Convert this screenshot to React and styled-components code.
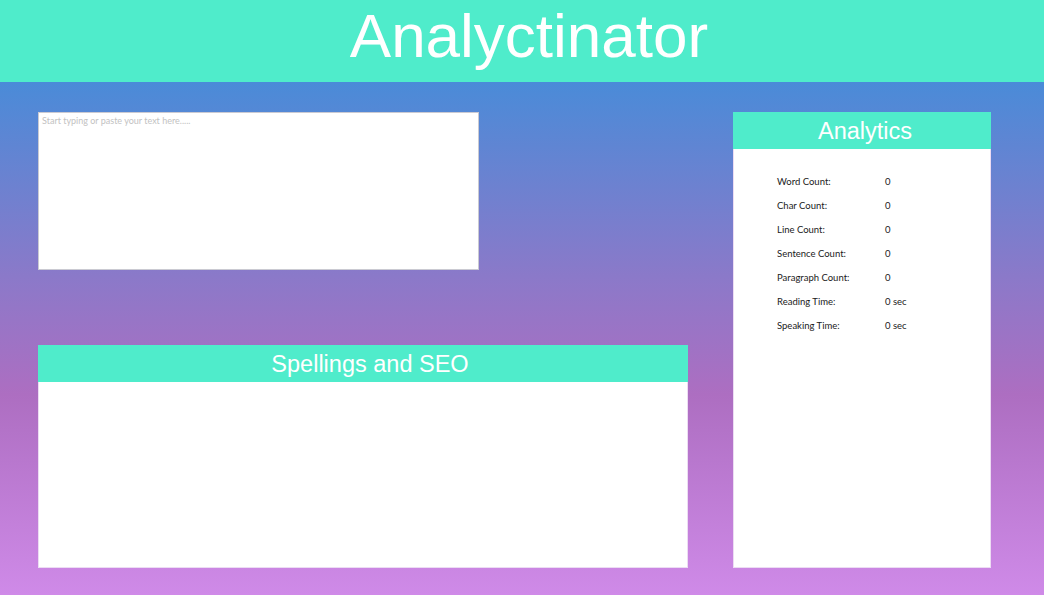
import React from "react";
import styled, { createGlobalStyle } from "styled-components";

const GlobalStyle = createGlobalStyle`
  html, body { margin: 0; padding: 0; }
  body {
    width: 1044px;
    height: 595px;
    overflow: hidden;
    font-family: "Liberation Sans", Arial, sans-serif;
  }
`;

const Page = styled.div`
  width: 1044px;
  height: 595px;
  display: flex;
  flex-direction: column;
`;

const Header = styled.header`
  height: 82px;
  flex: none;
  background: #4feccb;
  display: flex;
  justify-content: center;
  align-items: flex-start;
`;

const Title = styled.h1`
  margin: 0;
  font-family: "Liberation Sans", Arial, sans-serif;
  font-weight: 400;
  font-size: 62px;
  line-height: 71px;
  color: #ffffff;
  padding-left: 14px;
`;

const Main = styled.main`
  flex: 1;
  display: flex;
  gap: 45px;
  padding: 30px 53px 27px 38px;
  background: linear-gradient(180deg, #4a8bd8 0%, #8b79c9 38%, #ad6ec1 61%, #cf8ae8 100%);
`;

const LeftColumn = styled.div`
  width: 650px;
  display: flex;
  flex-direction: column;
  justify-content: space-between;
`;

const TextInput = styled.textarea`
  box-sizing: border-box;
  width: 441px;
  height: 158px;
  margin: 0;
  padding: 2px 3px;
  border: 1px solid #cacad2;
  background: #fff;
  resize: none;
  outline: none;
  font-family: "Lato", "Open Sans", sans-serif;
  font-size: 9px;
  &::placeholder { color: #c2c2c2; }
`;

const Panel = styled.section`
  box-sizing: border-box;
  background: #fff;
  border: 1px solid #ecdcf3;
  display: flex;
  flex-direction: column;
  width: ${p => p.$width}px;
  height: ${p => p.$height}px;
`;

const PanelHeader = styled.div`
  height: 37px;
  flex: none;
  box-sizing: border-box;
  background: #4feccb;
  color: #fff;
  font-family: "Liberation Sans", Arial, sans-serif;
  font-size: 23.5px;
  display: flex;
  align-items: center;
  justify-content: center;
  margin: -1px -1px 0;
  padding-top: 2px;
  padding-left: ${p => p.$shift || 0}px;
`;

const StatsList = styled.div`
  padding: 20px 0 0 43px;
  display: flex;
  flex-direction: column;
`;

const StatRow = styled.div`
  display: grid;
  grid-template-columns: 108px 1fr;
  height: 24px;
  align-items: center;
  font-family: "Lato", "Open Sans", sans-serif;
  font-size: 9.5px;
  color: #1a1a1a;
`;

const stats = [
  ["Word Count:", "0"],
  ["Char Count:", "0"],
  ["Line Count:", "0"],
  ["Sentence Count:", "0"],
  ["Paragraph Count:", "0"],
  ["Reading Time:", "0 sec"],
  ["Speaking Time:", "0 sec"],
];

export default function App() {
  return (
    <>
      <GlobalStyle />
      <Page>
        <Header>
          <Title>Analyctinator</Title>
        </Header>
        <Main>
          <LeftColumn>
            <TextInput placeholder="Start typing or paste your text here....." />
            <Panel $width={650} $height={223}>
              <PanelHeader $shift={14}>Spellings and SEO</PanelHeader>
            </Panel>
          </LeftColumn>
          <Panel $width={258} $height={456}>
            <PanelHeader $shift={6}>Analytics</PanelHeader>
            <StatsList>
              {stats.map(([label, value]) => (
                <StatRow key={label}>
                  <span>{label}</span>
                  <span>{value}</span>
                </StatRow>
              ))}
            </StatsList>
          </Panel>
        </Main>
      </Page>
    </>
  );
}
